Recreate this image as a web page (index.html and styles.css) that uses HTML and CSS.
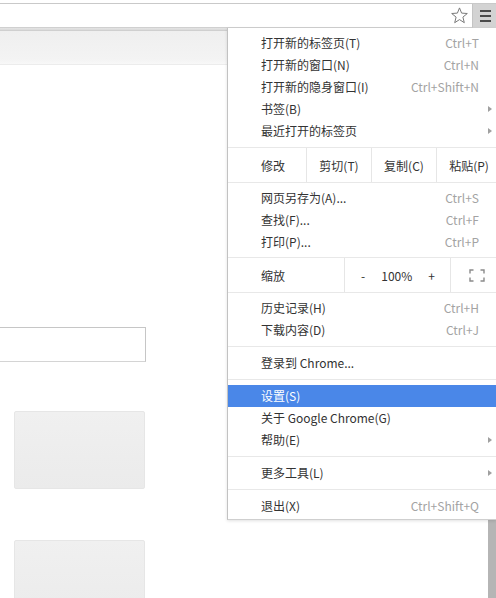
FILE: index.html
```html
<!DOCTYPE html>
<html lang="zh-CN">
<head>
<meta charset="utf-8">
<title>Chrome 菜单</title>
<link rel="stylesheet" href="styles.css">
</head>
<body>
<div class="page">
  <header class="toolbar">
    <div class="omnibox">
      <svg class="star" width="17" height="17" viewBox="0 0 17 17"><path d="M8.5 0.9 L10.6 6.1 L16.3 6.5 L11.9 10.1 L13.3 15.7 L8.5 12.6 L3.7 15.7 L5.1 10.1 L0.7 6.5 L6.4 6.1 Z" fill="none" stroke="#7a7a7a" stroke-width="1" stroke-linejoin="round"/></svg>
    </div>
    <div class="menu-btn"><span></span><span></span><span></span></div>
  </header>
  <div class="strip"></div>
  <div class="tabband"></div>
  <div class="viewport">
    <main class="content">
      <div class="search"></div>
      <div class="tile"></div>
      <div class="tile"></div>
    </main>
    <div class="scrollbar"></div>
  </div>

  <nav class="menu">
    <div class="item"><span class="label">打开新的标签页(T)</span><span class="key">Ctrl+T</span></div>
    <div class="item"><span class="label">打开新的窗口(N)</span><span class="key">Ctrl+N</span></div>
    <div class="item"><span class="label">打开新的隐身窗口(I)</span><span class="key">Ctrl+Shift+N</span></div>
    <div class="item"><span class="label">书签(B)</span><span class="arrow"></span></div>
    <div class="item"><span class="label">最近打开的标签页</span><span class="arrow"></span></div>

    <div class="edit-row">
      <div class="row-label">修改</div>
      <div class="cell">剪切(T)</div>
      <div class="cell">复制(C)</div>
      <div class="cell">粘贴(P)</div>
    </div>

    <div class="item"><span class="label">网页另存为(A)...</span><span class="key">Ctrl+S</span></div>
    <div class="item"><span class="label">查找(F)...</span><span class="key">Ctrl+F</span></div>
    <div class="item"><span class="label">打印(P)...</span><span class="key">Ctrl+P</span></div>

    <div class="zoom-row">
      <div class="zoom-label">缩放</div>
      <div class="zoom-ctrl"><span>-</span><span>100%</span><span>+</span></div>
      <div class="zoom-full">
        <svg width="16" height="13" viewBox="0 0 16 13"><path d="M1 4.5V1h3.5M11.5 1H15v3.5M15 8.5V12h-3.5M4.5 12H1V8.5" fill="none" stroke="#8a8a8a" stroke-width="1.4"/></svg>
      </div>
    </div>

    <div class="item"><span class="label">历史记录(H)</span><span class="key">Ctrl+H</span></div>
    <div class="item"><span class="label">下载内容(D)</span><span class="key">Ctrl+J</span></div>
    <div class="sep"></div>
    <div class="item"><span class="label">登录到 Chrome...</span></div>
    <div class="sep"></div>
    <div class="item active"><span class="label">设置(S)</span></div>
    <div class="item"><span class="label">关于 Google Chrome(G)</span></div>
    <div class="item"><span class="label">帮助(E)</span><span class="arrow"></span></div>
    <div class="sep"></div>
    <div class="item"><span class="label">更多工具(L)</span><span class="arrow"></span></div>
    <div class="sep"></div>
    <div class="item"><span class="label">退出(X)</span><span class="key">Ctrl+Shift+Q</span></div>
  </nav>
</div>
</body>
</html>
```
FILE: styles.css
```css
* { box-sizing: border-box; }
html, body {
  margin: 0;
  padding: 0;
  width: 496px;
  height: 598px;
  overflow: hidden;
  background: #fff;
  font-family: "Noto Sans CJK SC", "Noto Sans", sans-serif;
  font-size: 12px;
  color: #333;
}
.page {
  position: relative;
  width: 496px;
  height: 598px;
  overflow: hidden;
  display: flex;
  flex-direction: column;
}
.toolbar {
  flex-shrink: 0;
  display: flex;
  height: 25px;
  margin-top: 3px;
  border-top: 1px solid #c9c9c9;
}
.omnibox {
  flex: 1;
  background: #fff;
  border-right: 1px solid #c4c4c4;
  border-bottom: 1px solid #d0d0d0;
  display: flex;
  align-items: center;
  justify-content: flex-end;
  padding-right: 4px;
}
.star { display: block; }
.menu-btn {
  width: 23px;
  background: #d3d3d3;
  display: flex;
  flex-direction: column;
  align-items: center;
  justify-content: center;
  gap: 3px;
  padding-left: 2px;
}
.menu-btn span {
  display: block;
  width: 11px;
  height: 2px;
  background: #4a4a4a;
}
.strip {
  flex-shrink: 0;
  height: 3px;
  background: linear-gradient(#e4e4e4, #d9d9d9);
  border-bottom: 1px solid #cfcfcf;
}
.tabband {
  flex-shrink: 0;
  height: 34px;
  background: linear-gradient(#efefef, #f3f3f3 85%, #f8f8f8);
  border-bottom: 1px solid #ececec;
}
.viewport {
  flex: 1;
  min-height: 0;
  display: flex;
  overflow: hidden;
}
.content {
  flex: 1;
  display: flex;
  flex-direction: column;
  align-items: flex-start;
}
.search {
  flex-shrink: 0;
  margin-top: 262px;
  margin-left: -1px;
  width: 147px;
  height: 35px;
  border: 1px solid #c6c6c6;
  border-bottom-color: #d4d4d4;
  background: #fff;
}
.tile {
  flex-shrink: 0;
  margin-left: 14px;
  width: 131px;
  height: 78px;
  margin-top: 49px;
  border: 1px solid #e6e6e6;
  border-radius: 2px;
  background: linear-gradient(#f0f0f0, #ebebeb);
}
.tile + .tile { margin-top: 51px; }
.scrollbar {
  width: 8px;
  background: #b5b5b5;
}

/* dropdown menu overlaid on the page */
.menu {
  position: absolute;
  top: 28px;
  left: 227px;
  width: 269px;
  background: #fff;
  border-left: 1px solid #c2c2c2;
  border-bottom: 1px solid #cfcfcf;
  padding: 4px 0 2px;
  box-shadow: 0 1px 3px rgba(0,0,0,0.12);
}
.item {
  display: flex;
  align-items: center;
  height: 22px;
  line-height: 22px;
  padding: 0 17px 0 33px;
  white-space: nowrap;
}
.label { flex: 1; color: #333; }
.key { color: #a3a3a3; }
.arrow {
  width: 0;
  height: 0;
  border-left: 4px solid #a0a0a0;
  border-top: 3.5px solid transparent;
  border-bottom: 3.5px solid transparent;
  margin-right: -13px;
}
.item.active { background: #4a87e8; }
.item.active .label { color: #fff; }
.sep {
  height: 1px;
  background: #e8e8e8;
  margin: 5px 0;
}
.edit-row, .zoom-row {
  display: flex;
  height: 36px;
  border-top: 1px solid #e8e8e8;
  border-bottom: 1px solid #e8e8e8;
  margin: 5px 0 4px;
  white-space: nowrap;
}
.row-label {
  flex: 0 0 78px;
  padding-left: 33px;
  display: flex;
  align-items: center;
}
.cell {
  flex: 0 0 65px;
  border-left: 1px solid #e6e6e6;
  display: flex;
  align-items: center;
  justify-content: center;
}
.zoom-row { margin-top: 4px; }
.zoom-label {
  flex: 0 0 116px;
  padding-left: 33px;
  display: flex;
  align-items: center;
}
.zoom-ctrl {
  flex: 0 0 106px;
  border-left: 1px solid #e6e6e6;
  display: flex;
  align-items: center;
  justify-content: space-between;
  padding: 0 15px 0 16px;
}
.zoom-full {
  flex: 0 0 52px;
  border-left: 1px solid #e6e6e6;
  display: flex;
  align-items: center;
  justify-content: center;
}
.zoom-full svg { display: block; }
```
